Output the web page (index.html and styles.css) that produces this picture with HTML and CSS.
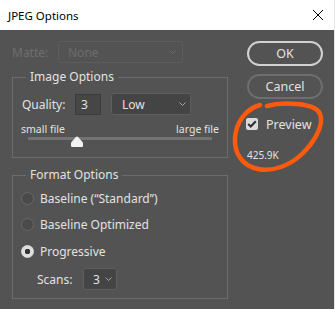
FILE: index.html
```html
<!DOCTYPE html>
<html lang="en">
<head>
    <meta charset="UTF-8">
    <title>JPEG Options</title>
    <link rel="stylesheet" href="styles.css">
</head>
<body>
    <div class="dialog">
        <div class="titlebar">
            <span class="title">JPEG Options</span>
            <svg class="close" width="10" height="10" viewBox="0 0 10 10"><path d="M0 0L10 10M10 0L0 10" stroke="#000" stroke-width="1"/></svg>
        </div>
        <div class="content">
            <div class="left">
                <div class="matte-row">
                    <span class="matte-label">Matte:</span>
                    <div class="select matte-select">
                        <span>None</span>
                        <svg class="chev" width="7" height="4" viewBox="0 0 7 4"><path d="M0.5 0.5L3.5 3.5L6.5 0.5" fill="none" stroke="#6a6a6a"/></svg>
                    </div>
                </div>

                <fieldset class="group image-group">
                    <legend>Image Options</legend>
                    <div class="quality-row">
                        <span class="quality-label">Quality:</span>
                        <div class="num-input">3</div>
                        <div class="select low-select">
                            <span>Low</span>
                            <svg class="chev" width="7" height="4" viewBox="0 0 7 4"><path d="M0.5 0.5L3.5 3.5L6.5 0.5" fill="none" stroke="#a8a8a8"/></svg>
                        </div>
                    </div>
                    <div class="slider-labels">
                        <span>small file</span>
                        <span>large file</span>
                    </div>
                    <div class="slider">
                        <div class="track"></div>
                        <svg class="thumb" width="12" height="11" viewBox="0 0 12 11"><path d="M6 0.5Q6.6 0.5 7.1 1.1L11.5 6Q12 6.5 12 7.5V10Q12 11 11 11H1Q0 11 0 10V7.5Q0 6.5 0.5 6L4.9 1.1Q5.4 0.5 6 0.5Z" fill="#f2f2f2"/></svg>
                    </div>
                </fieldset>

                <fieldset class="group format-group">
                    <legend>Format Options</legend>
                    <div class="radio"><span class="dot"></span>Baseline (“Standard”)</div>
                    <div class="radio"><span class="dot"></span>Baseline Optimized</div>
                    <div class="radio checked"><span class="dot"></span>Progressive</div>
                    <div class="scans-row">
                        <span class="scans-label">Scans:</span>
                        <div class="select scans-select">
                            <span>3</span>
                            <svg class="chev" width="7" height="4" viewBox="0 0 7 4"><path d="M0.5 0.5L3.5 3.5L6.5 0.5" fill="none" stroke="#a8a8a8"/></svg>
                        </div>
                    </div>
                </fieldset>
            </div>

            <div class="right">
                <div class="btn btn-default">OK</div>
                <div class="btn">Cancel</div>
                <div class="check">
                    <span class="box"><svg width="10" height="8" viewBox="0 0 10 8"><path d="M1.2 4L3.8 6.5L8.8 1.2" fill="none" stroke="#2e2e2e" stroke-width="2"/></svg></span>
                    Preview
                </div>
                <div class="filesize">425.9K</div>
            </div>
        </div>

        <!-- hand drawn marker around the preview -->
        <svg class="annotation" width="335" height="309" viewBox="0 0 335 309">
            <path d="M260 105C246 109 236 122 235 138C234 154 243 166 258 169C272 172 290 166 303 153C314 142 322 128 321 118C320 108 310 105 296 104C285 103 274 104 267 106" fill="none" stroke="#fd5a0e" stroke-width="4.5" stroke-linecap="round"/>
        </svg>
    </div>
</body>
</html>
```

FILE: styles.css
```css
* {
    margin: 0;
    padding: 0;
    box-sizing: border-box;
}

body {
    width: 335px;
    height: 309px;
    overflow: hidden;
    background: #535353;
    font-family: "Noto Sans", sans-serif;
    font-size: 12px;
    color: #e2e2e2;
}

.dialog {
    position: relative;
    height: 309px;
    border-right: 1px solid #e6e6e6;
}

.titlebar {
    height: 30px;
    background: #fff;
    color: #000;
    display: flex;
    align-items: center;
    justify-content: space-between;
    padding: 0 11px 0 8px;
}

.titlebar .title {
    font-size: 11.5px;
}

.content {
    display: flex;
    padding-top: 11px;
}

.left {
    width: 228px;
    padding-left: 12px;
}

.right {
    width: 76px;
    margin-left: 19px;
}

/* selects */
.select {
    display: flex;
    align-items: center;
    justify-content: space-between;
    height: 22px;
    border: 1px solid #5e5e5e;
    border-radius: 3px;
    background: #444;
}

.matte-row {
    display: flex;
    align-items: center;
    height: 22px;
}

.matte-label {
    width: 46px;
    color: #6e6e6e;
}

.matte-select {
    width: 125px;
    padding: 0 6px 0 9px;
    background: #535353;
    border-color: #5c5c5c;
    color: #6c6c6c;
}

/* groups */
.group {
    width: 216px;
    border: 1px solid #6c6c6c;
    padding: 0 8px 0 9px;
}

.group legend {
    margin-left: 4px;
    padding: 0 4px;
    line-height: 16px;
}

.image-group {
    margin-top: 6px;
    padding-top: 8px;
    padding-bottom: 8px;
}

.quality-row {
    display: flex;
    align-items: center;
    height: 22px;
}

.quality-label {
    width: 53px;
}

.num-input {
    width: 26px;
    height: 21px;
    line-height: 19px;
    padding-left: 5px;
    background: #464646;
    border: 1px solid #3c3c3c;
}

.low-select {
    width: 80px;
    margin-left: 10px;
    padding: 0 4px 0 10px;
}

.slider-labels {
    display: flex;
    justify-content: space-between;
    margin: 8px 0 0 -1px;
    font-size: 10.5px;
    line-height: 12px;
}

.slider {
    position: relative;
    height: 12px;
}

.track {
    margin: 2px 0 0 6px;
    width: 184px;
    height: 3px;
    background: #737373;
}

.thumb {
    position: absolute;
    left: 49px;
    top: -1px;
}

.format-group {
    margin-top: 9px;
    padding-top: 2px;
    padding-bottom: 8px;
    padding-left: 8px;
}

.format-group legend {
    margin-left: 5px;
}

.radio {
    display: flex;
    align-items: center;
    height: 26px;
}

.radio.checked {
    margin-top: 1px;
}

.radio .dot {
    width: 13px;
    height: 13px;
    margin-right: 6px;
    border-radius: 50%;
    border: 1px solid #6a6a6a;
    background: #4a4a4a;
}

.radio.checked .dot {
    border-color: #dedede;
    background: radial-gradient(circle, #333 2.5px, #dedede 3px);
}

.scans-row {
    display: flex;
    align-items: center;
    height: 22px;
    margin-top: 4px;
    padding-left: 16px;
}

.scans-label {
    width: 46px;
}

.scans-select {
    width: 34px;
    padding: 0 4px 0 9px;
}

/* buttons */
.btn {
    height: 25px;
    line-height: 21px;
    text-align: center;
    border: 2px solid #6e6e6e;
    border-radius: 13px;
    font-size: 12.5px;
}

.btn-default {
    border-color: #d2d2d2;
}

.btn + .btn {
    margin-top: 8px;
}

.check {
    display: flex;
    align-items: center;
    height: 12px;
    margin: 19px 0 0 -1px;
    font-size: 12.5px;
}

.check .box {
    display: flex;
    align-items: center;
    justify-content: center;
    width: 12px;
    height: 12px;
    margin-right: 8px;
    border-radius: 2px;
    background: #dadada;
}

.filesize {
    margin-top: 19px;
    font-size: 10px;
    line-height: 12px;
}

.annotation {
    position: absolute;
    left: 0;
    top: 0;
    pointer-events: none;
}
```
